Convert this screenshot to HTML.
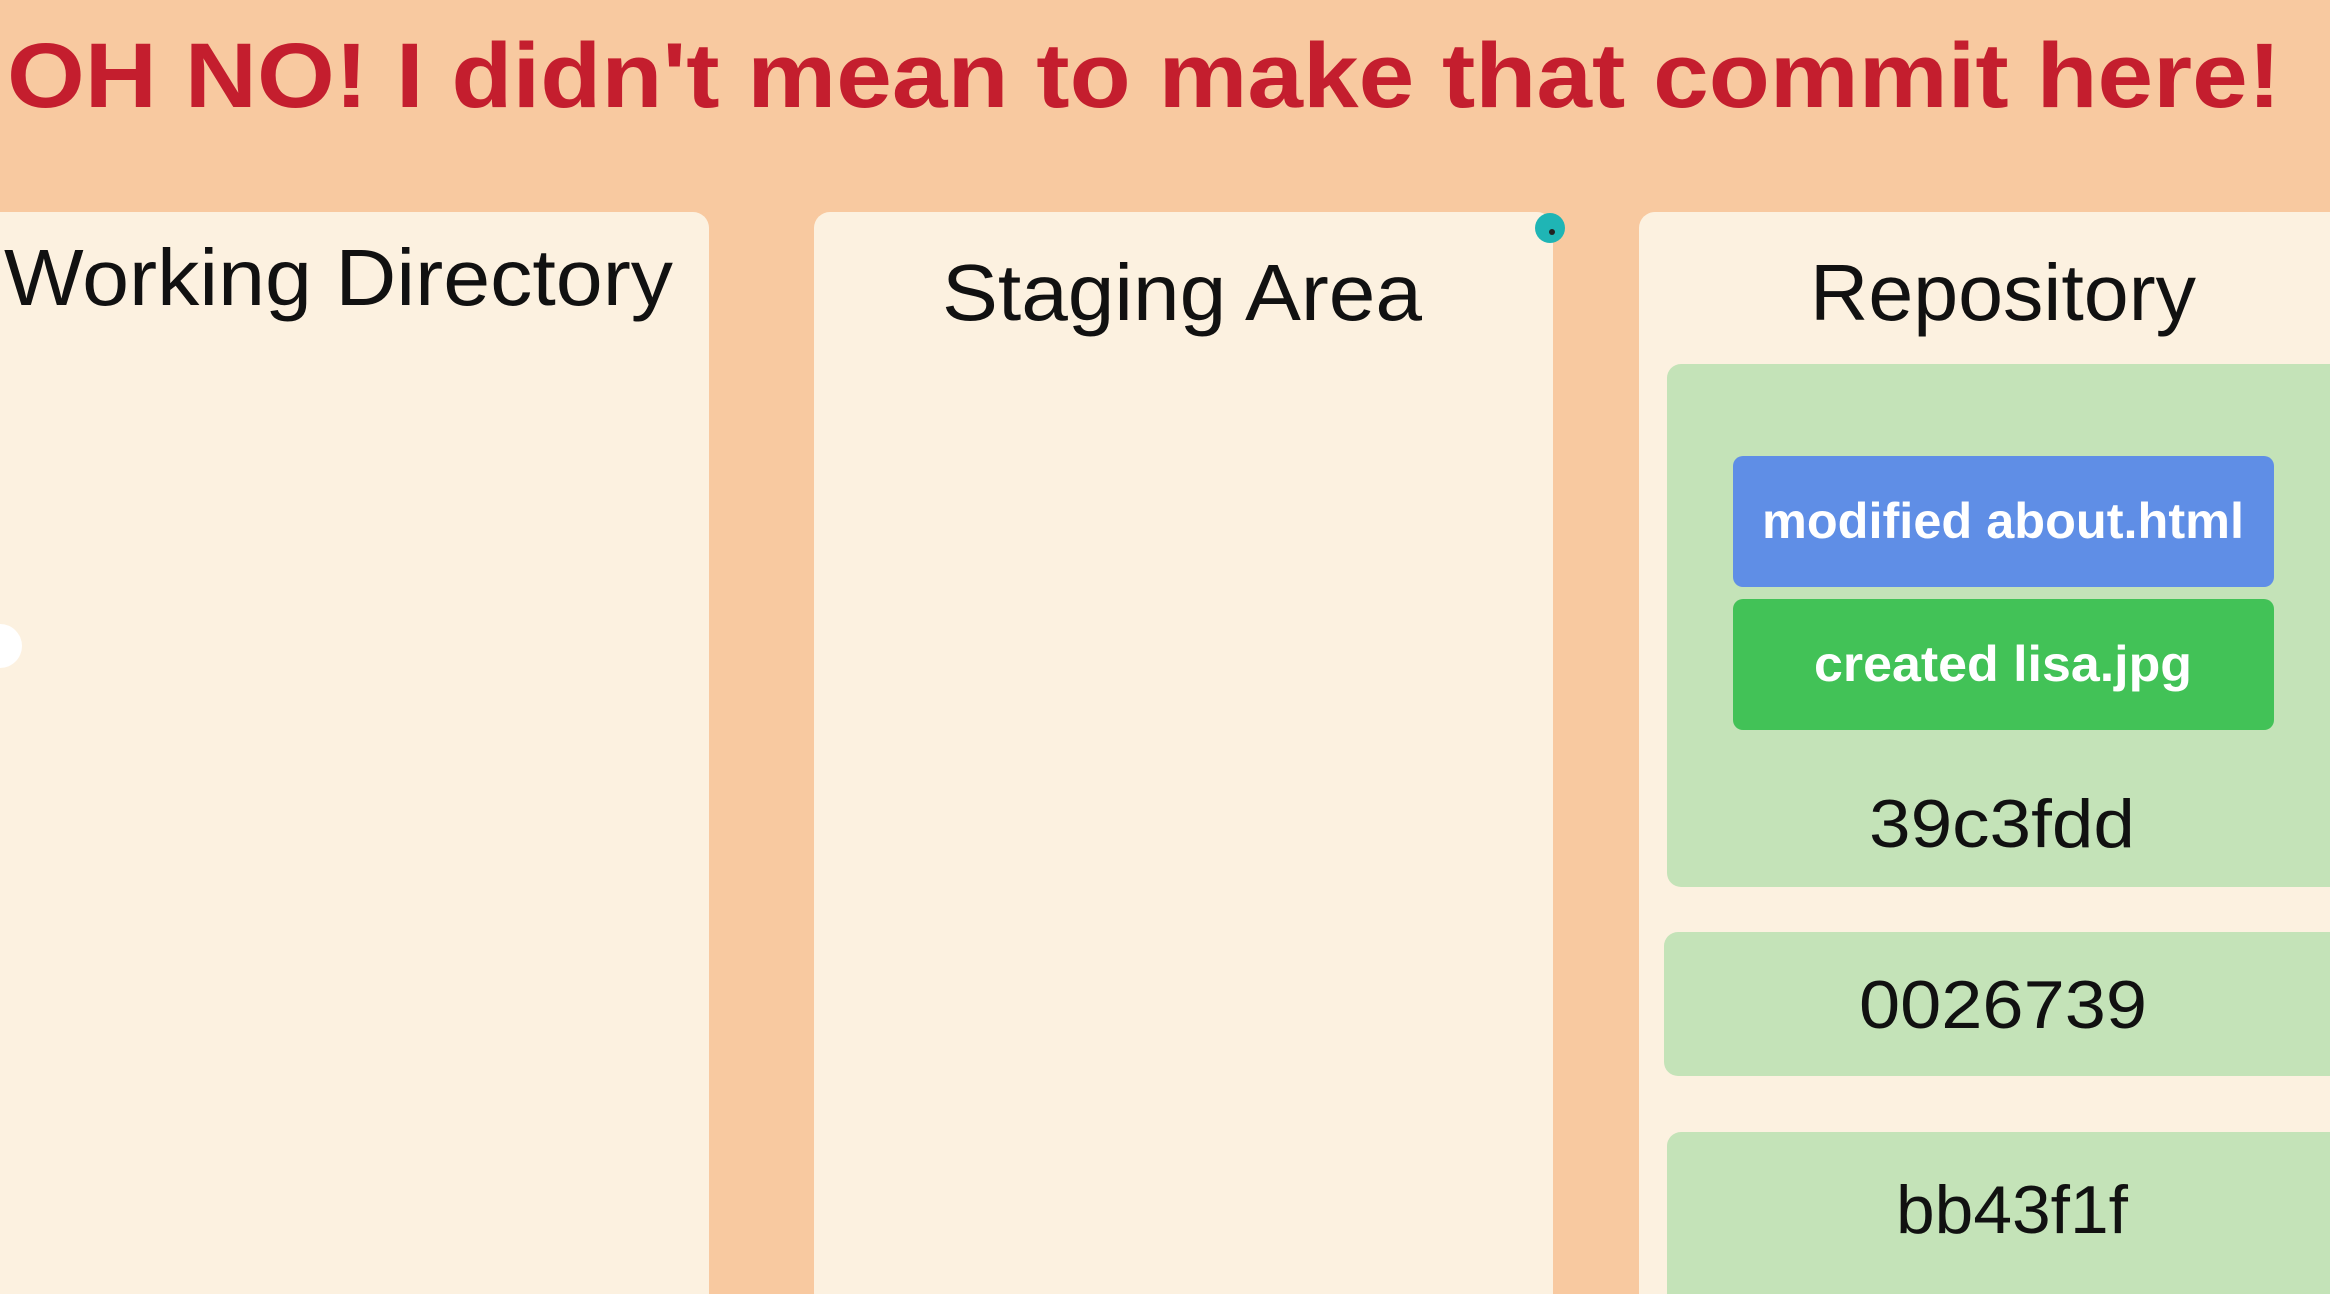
<!DOCTYPE html>
<html><head><meta charset="utf-8"><style>html,body{margin:0;padding:0;width:2330px;height:1294px;overflow:hidden;background:#f8c9a0}</style></head>
<body>
<svg width="2330" height="1294" viewBox="0 0 2330 1294" xmlns="http://www.w3.org/2000/svg" style="display:block">
<rect width="2330" height="1294" fill="#f8c9a0"/>
<text x="7" y="107" font-family="Liberation Sans, sans-serif" font-weight="bold" font-size="92" fill="#c41e2e" textLength="2274" lengthAdjust="spacingAndGlyphs">OH NO! I didn't mean to make that commit here!</text>
<rect x="-20" y="212" width="729" height="1120" rx="16" fill="#fcf1e0"/>
<rect x="814" y="212" width="739" height="1120" rx="16" fill="#fcf1e0"/>
<rect x="1639" y="212" width="720" height="1120" rx="16" fill="#fcf1e0"/>
<g font-family="Liberation Sans, sans-serif" font-size="80" fill="#111">
<text x="4" y="305" textLength="669" lengthAdjust="spacingAndGlyphs">Working Directory</text>
<text x="942" y="320" textLength="480" lengthAdjust="spacingAndGlyphs">Staging Area</text>
<text x="1810" y="320" textLength="386" lengthAdjust="spacingAndGlyphs">Repository</text>
</g>
<rect x="1667" y="364" width="700" height="523" rx="14" fill="#c4e3b8"/>
<rect x="1733" y="456" width="541" height="131" rx="10" fill="#5f8ee6"/>
<rect x="1733" y="599" width="541" height="131" rx="10" fill="#42c257"/>
<g font-family="Liberation Sans, sans-serif" font-size="50" font-weight="bold" fill="#fff">
<text x="1762" y="538" textLength="482" lengthAdjust="spacingAndGlyphs">modified about.html</text>
<text x="1814" y="681" textLength="378" lengthAdjust="spacingAndGlyphs">created lisa.jpg</text>
</g>
<rect x="1664" y="932" width="700" height="144" rx="14" fill="#c4e3b8"/>
<rect x="1667" y="1132" width="700" height="200" rx="14" fill="#c4e3b8"/>
<g font-family="Liberation Sans, sans-serif" font-size="68" fill="#111">
<text x="1869" y="847" textLength="266" lengthAdjust="spacingAndGlyphs">39c3fdd</text>
<text x="1859" y="1028" textLength="288" lengthAdjust="spacingAndGlyphs">0026739</text>
<text x="1896" y="1233" textLength="232" lengthAdjust="spacingAndGlyphs">bb43f1f</text>
</g>
<circle cx="1550" cy="228" r="15" fill="#1fb5b5"/>
<circle cx="1552" cy="232" r="3" fill="#222"/>
<circle cx="0" cy="646" r="22" fill="#ffffff"/>
</svg>
</body></html>
